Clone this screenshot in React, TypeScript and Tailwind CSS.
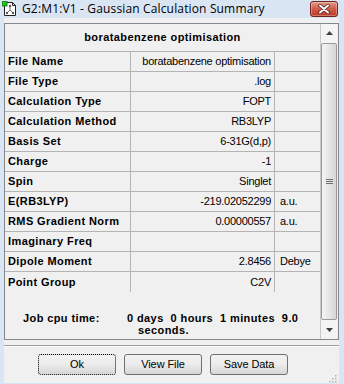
import React from 'react';

const rows: [string, string, string][] = [
  ['File Name', 'boratabenzene optimisation', ''],
  ['File Type', '.log', ''],
  ['Calculation Type', 'FOPT', ''],
  ['Calculation Method', 'RB3LYP', ''],
  ['Basis Set', '6-31G(d,p)', ''],
  ['Charge', '-1', ''],
  ['Spin', 'Singlet', ''],
  ['E(RB3LYP)', '-219.02052299', 'a.u.'],
  ['RMS Gradient Norm', '0.00000557', 'a.u.'],
  ['Imaginary Freq', '', ''],
  ['Dipole Moment', '2.8456', 'Debye'],
  ['Point Group', 'C2V', ''],
];

const sans = "font-['Liberation_Sans',Arial,sans-serif]";

// little gaussview document icon in the title bar
const TitleIcon = () => (
  <svg width="16" height="16" viewBox="0 0 16 16" className="shrink-0">
    <path d="M2.5 1.5h8l3 3v10h-11z" fill="#fff" stroke="#222" />
    <path d="M10.5 1.5v3h3" fill="none" stroke="#222" />
    <line x1="8" y1="5" x2="8" y2="9" stroke="#777" />
    <line x1="8" y1="9" x2="5" y2="12" stroke="#777" />
    <line x1="8" y1="9" x2="11" y2="12" stroke="#777" />
    <circle cx="8" cy="5" r="1.2" fill="#555" />
    <circle cx="5" cy="12" r="1.2" fill="#555" />
    <circle cx="11" cy="12" r="1.2" fill="#555" />
    <rect x="0" y="0" width="5" height="5" fill="#22c222" stroke="#0a6a0a" strokeWidth="0.8" />
  </svg>
);

const CloseButton = () => (
  <div className="w-[28px] h-[16px] rounded-[3px] border border-[#6e241c] bg-gradient-to-b from-[#e49a8c] via-[#cf5a48] to-[#c03a26] flex items-center justify-center shadow-[inset_0_0_0_1px_rgba(255,255,255,0.3)]">
    <svg width="12" height="10" viewBox="0 0 12 10">
      <path d="M2 1.5 L10 8.5 M10 1.5 L2 8.5" stroke="#4a1a14" strokeWidth="3.4" strokeLinecap="round" />
      <path d="M2 1.5 L10 8.5 M10 1.5 L2 8.5" stroke="#fff" strokeWidth="2" strokeLinecap="round" />
    </svg>
  </div>
);

const Scrollbar = () => (
  <div className="w-[17px] border-l border-[#c8c8c8] bg-[#f4f4f4] flex flex-col">
    <div className="h-[18px] flex items-center justify-center">
      <svg width="7" height="4" viewBox="0 0 7 4"><path d="M0 4 L3.5 0 L7 4z" fill="#404040" /></svg>
    </div>
    <div className="flex-1 flex flex-col py-[1px]">
      <div className="flex-1 rounded-[2px] border border-[#9a9a9a] bg-gradient-to-r from-[#f4f4f4] via-[#e6e6e6] to-[#d6d6d6] flex items-center justify-center">
        <div className="flex flex-col gap-[1px]">
          <div className="w-[7px] h-[1px] bg-[#6e6e6e]" />
          <div className="w-[7px] h-[1px] bg-[#6e6e6e]" />
          <div className="w-[7px] h-[1px] bg-[#6e6e6e]" />
        </div>
      </div>
    </div>
    <div className="h-[18px] flex items-center justify-center">
      <svg width="7" height="4" viewBox="0 0 7 4"><path d="M0 0 L7 0 L3.5 4z" fill="#404040" /></svg>
    </div>
  </div>
);

const Btn = ({ label, focused }: { label: string; focused?: boolean }) => (
  <div
    className={`w-[78px] h-[21px] rounded-[3px] border ${
      focused ? 'border-dotted border-black' : 'border-[#707070]'
    } bg-gradient-to-b from-[#f3f3f3] via-[#ebebeb] to-[#d6d6d6] flex items-center justify-center text-[11px] tracking-[-0.1px] text-black`}
  >
    {label}
  </div>
);

export default function App() {
  return (
    <div className={`w-[344px] h-[384px] bg-[#d9e5f3] flex flex-col ${sans}`}>
      {/* title bar */}
      <div className="h-[22px] flex items-center pl-[2px] pr-[6px]">
        <TitleIcon />
        <span className="ml-[4px] text-[12px] text-black font-['Open_Sans',sans-serif] tracking-[0.15px]">
          G2:M1:V1 - Gaussian Calculation Summary
        </span>
        <div className="ml-auto">
          <CloseButton />
        </div>
      </div>

      {/* client area */}
      <div className="flex-1 ml-[4px] mr-[5px] mb-[4px] bg-[#f0f0f0] flex flex-col">
        <div className="mt-[5px] h-[317px] border border-[#828790] flex">
          <div className="w-[315px] flex flex-col">
            <div className="h-[28px] border-b border-[#b4b4b4] flex items-center justify-center text-[11px] font-bold tracking-[0.4px] text-black">
              boratabenzene optimisation
            </div>
            {rows.map(([label, value, unit], i) => (
              <div
                key={label}
                className={`h-[20px] flex text-[11px] text-black ${i < rows.length - 1 ? 'border-b border-[#b4b4b4]' : ''}`}
              >
                <div className="w-[126px] border-r border-[#b4b4b4] pl-[3px] flex items-center font-bold tracking-[0.4px] whitespace-nowrap">
                  {label}
                </div>
                <div className="w-[144px] border-r border-[#b4b4b4] pr-[3px] flex items-center justify-end tracking-[-0.25px] whitespace-nowrap">
                  {value}
                </div>
                <div className="flex-1 pl-[5px] flex items-center tracking-[-0.25px]">{unit}</div>
              </div>
            ))}
            <div className="flex-1 flex items-start pt-[20px] text-[11px] font-bold tracking-[0.4px] text-black leading-[12px]">
              <div className="w-[122px] pl-[18px]">Job cpu time:</div>
              <div className="flex flex-col">
                <span className="whitespace-pre">0 days  0 hours  1 minutes  9.0</span>
                <span className="ml-[11px]">seconds.</span>
              </div>
            </div>
          </div>
          <Scrollbar />
        </div>

        {/* etched separator */}
        <div className="mt-[5px] h-[1px] bg-[#a0a0a0]" />
        <div className="h-[1px] bg-white" />

        <div className="mt-[7px] flex gap-[8px] pl-[34px]">
          <Btn label="Ok" focused />
          <Btn label="View File" />
          <Btn label="Save Data" />
        </div>

        <div className="flex-1 flex justify-end items-end pr-[2px]">
          <svg width="8" height="8" viewBox="0 0 8 8">
            <rect x="6" y="0" width="1.5" height="1.5" fill="#b0b0b0" />
            <rect x="3" y="3" width="1.5" height="1.5" fill="#b0b0b0" />
            <rect x="6" y="3" width="1.5" height="1.5" fill="#b0b0b0" />
            <rect x="0" y="6" width="1.5" height="1.5" fill="#b0b0b0" />
            <rect x="3" y="6" width="1.5" height="1.5" fill="#b0b0b0" />
            <rect x="6" y="6" width="1.5" height="1.5" fill="#b0b0b0" />
          </svg>
        </div>
      </div>
    </div>
  );
}
